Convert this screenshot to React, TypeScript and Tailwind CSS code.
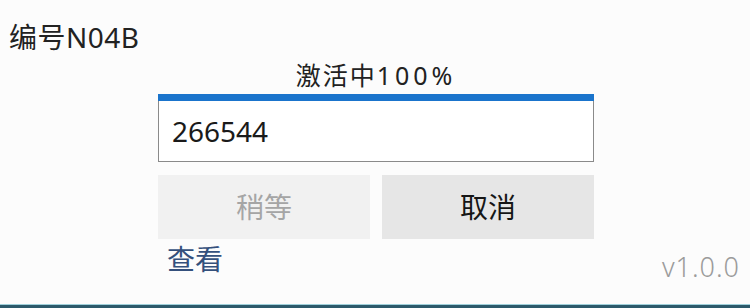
import React from 'react'

const latin = "font-['Noto_Sans','Noto_Sans_CJK_SC',sans-serif]"

const App = () => {
  return (
    <div className={`w-[750px] h-[308px] bg-[#fcfcfc] flex flex-col text-[#1b1b1b] ${latin}`}>
      <div className='pl-[9px] pt-[20px] text-[28px] leading-[34px] tracking-[0.5px] text-[#222]'>编号N04B</div>

      <div className='flex flex-col w-[436px] ml-[158px] mt-[6px]'>
        <div className='text-center text-[25px] leading-[30px] tracking-[2px] text-[#222]'>
          激活中<span className='tracking-[4px]'>100%</span>
        </div>
        <div className='h-[7px] bg-[#1a74cc] mt-[4px]' />
        <div className='h-[61px] border border-t-0 border-[#8a8a8a] bg-white flex items-center pl-[13px] text-[28px] text-[#1a1a1a]'>
          266544
        </div>
        <div className='flex gap-[12px] mt-[13px]'>
          <button className='w-[212px] h-[64px] bg-[#f1f1f1] text-[#a5a5a5] text-[28px]'>稍等</button>
          <button className='w-[212px] h-[64px] bg-[#e6e6e6] text-[#161616] text-[28px]'>取消</button>
        </div>
      </div>

      <div className='flex items-start'>
        <span className='ml-[167px] mt-[4px] text-[28px] leading-[32px] text-[#34507c]'>查看</span>
        <span className='ml-auto mr-[10px] mt-[13px] text-[27px] leading-[30px] font-light text-[#9b9b9b] tracking-[1px]'>v1.0.0</span>
      </div>

      <div className='mt-auto border-t border-[#9fd0da] h-[4px] bg-[#2d5a6b]' />
    </div>
  )
}

export default App
